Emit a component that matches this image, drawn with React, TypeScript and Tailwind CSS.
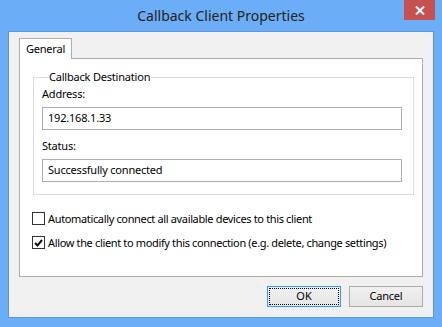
import React from 'react';

const font = { fontFamily: '"Noto Sans", "Liberation Sans", sans-serif' };

const CheckBox = ({ checked, label }: { checked: boolean; label: string }) => (
  <label className="flex items-center h-[13px] text-[11px] tracking-[-0.35px] text-black whitespace-nowrap">
    <span className="w-[13px] h-[13px] border border-[#333] bg-white flex items-center justify-center shrink-0">
      {checked && (
        <svg width="9" height="8" viewBox="0 0 9 8">
          <path d="M1 4 L3.5 6.5 L8 1" fill="none" stroke="#111" strokeWidth="2" />
        </svg>
      )}
    </span>
    <span className="ml-[3px] leading-none">{label}</span>
  </label>
);

const Field = ({ label, value }: { label: string; value: string }) => (
  <div className="flex flex-col">
    <span className="text-[11px] tracking-[-0.2px] leading-[16px] text-black">{label}</span>
    <div className="mt-[5px] h-[23px] border border-[#abadb3] bg-white flex items-center px-[5px] text-[11px] tracking-[-0.2px] text-black">
      {value}
    </div>
  </div>
);

export default function App() {
  return (
    <div className="w-[442px] h-[327px] bg-[#6badf6] flex flex-col select-none" style={font}>
      <div className="relative h-[31px] shrink-0 flex items-center justify-center">
        <span className="text-[14px] text-[#222] -mt-[1px]">Callback Client Properties</span>
        <button className="absolute top-0 right-[7px] w-[31px] h-[20px] bg-[#c75050] flex items-center justify-center">
          <svg width="10" height="9" viewBox="0 0 10 9">
            <path d="M1 0.5 L9 8.5 M9 0.5 L1 8.5" stroke="#fff" strokeWidth="2" />
          </svg>
        </button>
      </div>

      <div className="mx-[8px] mb-[9px] flex-1 bg-[#f0f0f0] border border-[#5a98dd] flex flex-col px-[10px] pt-[6px]">
        <div className="flex">
          <div className="w-[53px] h-[21px] bg-white border border-b-0 border-[#adadad] text-[11px] tracking-[-0.2px] text-black flex items-center justify-center -mb-[1px] relative z-10">
            General
          </div>
        </div>
        <div className="h-[219px] bg-white border border-[#adadad] pl-[13px] pr-[8px] pt-[10px] flex flex-col">
          <fieldset className="border border-[#dcdcdc] pl-[8px] pr-[11px] pb-[11px] h-[126px]">
            <legend className="ml-[6px] px-[1px] text-[11px] tracking-[-0.2px] text-black leading-[16px]">Callback Destination</legend>
            <div className="flex flex-col gap-[8px] mt-[1px]">
              <Field label="Address:" value="192.168.1.33" />
              <Field label="Status:" value="Successfully connected" />
            </div>
          </fieldset>
          <div className="flex flex-col gap-[11px] mt-[17px] -ml-[1px]">
            <CheckBox checked={false} label="Automatically connect all available devices to this client" />
            <CheckBox checked label="Allow the client to modify this connection (e.g. delete, change settings)" />
          </div>
        </div>
        <div className="flex justify-end gap-[8px] mt-[9px]">
          <button className="w-[74px] h-[21px] border border-[#3399ff] bg-gradient-to-b from-[#f0f0f0] to-[#e5e5e5] p-[1px] text-[11px] text-black">
            <span className="w-full h-full border border-dotted border-black flex items-center justify-center">OK</span>
          </button>
          <button className="w-[74px] h-[21px] border border-[#acacac] bg-gradient-to-b from-[#f0f0f0] to-[#e5e5e5] text-[11px] tracking-[-0.2px] text-black flex items-center justify-center">
            Cancel
          </button>
        </div>
      </div>
    </div>
  );
}
